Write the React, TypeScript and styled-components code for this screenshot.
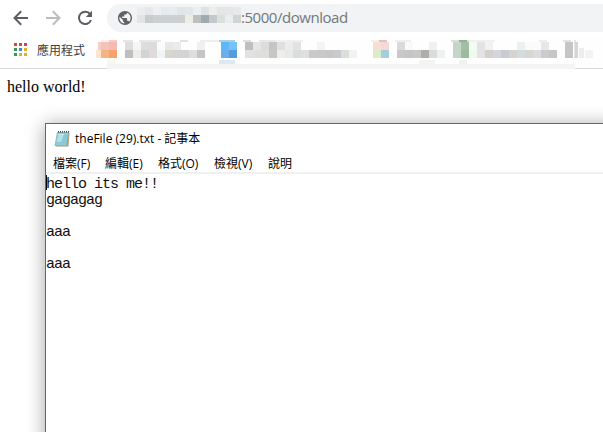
import React from 'react';
import styled, { createGlobalStyle } from 'styled-components';

const Global = createGlobalStyle`
  * { box-sizing: border-box; }
  body { margin: 0; background: #fff; overflow: hidden; }
`;
const Browser = styled.main`
  width: 603px; height: 432px; overflow: hidden; background: #fff;
  display: flex; flex-direction: column;
`;
const Toolbar = styled.header`
  height: 36px; flex: none; display: flex; align-items: center; padding-left: 13px;
`;
const Nav = styled.nav`
  display: flex; gap: 16px; width: 94px;
  svg { width: 16px; height: 16px; flex: none; overflow: visible; }
`;
const AddressBar = styled.div`
  flex: 1; height: 28px; background: #f1f3f4; border-radius: 14px 0 0 14px;
  display: flex; align-items: center; padding-left: 11px;
`;
const HostMosaic = styled.svg`
  width: 104px; height: 16px; margin: -6px 0 0 5px; flex: none;
`;
const Url = styled.span`
  font: 15px/28px "Open Sans", "Noto Sans", sans-serif; letter-spacing: -0.46px; color: #74777b;
  margin-top: -2px; white-space: pre;
`;
const Bookmarks = styled.div`
  height: 33px; flex: none; display: flex; align-items: flex-start; background: #fefefe;
`;
const AppsLink = styled.div`
  width: 96px; height: 33px; border-bottom: 1px solid #d9dcde; padding-left: 14px;
  display: flex; align-items: center; gap: 10px;
  svg { width: 13px; height: 13px; margin-top: -5px; flex: none; }
`;
const AppsLabel = styled.span`
  font: 12px/16px "Noto Sans CJK TC", sans-serif; color: #3c4043; margin-top: -4px; white-space: nowrap;
`;
const Mosaic = styled.svg`width: 507px; height: 33px; flex: none;`;
const PageText = styled.p`
  margin: 9px 0 0 7px; flex: none; font: 16px/18px "Liberation Serif", serif; color: #000;
`;
const Notepad = styled.section`
  margin: 27px 0 0 45px; width: 700px; height: 400px; flex: none; background: #fff;
  border: 1px solid #666; box-shadow: 0 2px 18px rgba(0,0,0,.36);
`;
const TitleBar = styled.div`
  height: 30px; display: flex; align-items: center; gap: 4px; padding-left: 8px;
  font: 12px/20px "Open Sans", "Noto Sans CJK TC", sans-serif; color: #000;
  svg { width: 17px; height: 18px; flex: none; }
`;
const Menu = styled.div`
  height: 20px; display: flex; padding-left: 7px; border-bottom: 2px solid #f0f0f0;
  font: 12px/20px "Open Sans", "Noto Sans CJK TC", sans-serif; color: #000; white-space: nowrap;
`;
const MenuItem = styled.span<{ $width: number }>`width: ${p => p.$width}px; flex: none;`;
const Editor = styled.pre`
  margin: 0; padding-top: 3px; font: 15px/16px "Liberation Mono", monospace; letter-spacing: -1px; color: #111;
  background: linear-gradient(#000, #000) 0 1px / 1px 15px no-repeat;
`;

type Cell = [number, string, string];
const hostCells: Cell[] = [
  [0, '#ededef', '#e2e4e5'], [1, '#e5e8ea', '#c8cbcc'], [2, '#eef1f4', '#cdd0d1'],
  [3, '#e4ebef', '#cdd0d2'], [4, '#e7ecf0', '#cdd0d2'], [5, '#e2e5e5', '#cbcfd0'],
  [6, '#e3e6e8', '#eceee4'], [7, '#eceff2', '#bcc0c1'], [8, '#dde3e3', '#a1abad'],
  [9, '#ebeeec', '#c4c9ca'], [10, '#e3e6e5', '#dce0dc'], [11, '#e3e7e7', '#e9eded'], [12, '#e6e9e9', '#d0d4d3'],
];
const W = '#fefefe';
const bookmarkCells: Cell[] = [
  [0, '#f4c2b8', '#f6b384'], [1, '#f4bcb0', '#f5a26e'], [3, '#dedede', '#bfbfbd'], [4, '#f4f6f4', '#eceeea'],
  [5, '#dcdddc', '#d2d4d2'], [6, '#dedadc', '#e0dadc'], [7, '#fafbfb', '#f2f5f5'], [8, '#e8e8e6', '#d9d6d0'],
  [9, '#ebebe9', '#d4d4d4'], [10, W, '#d4d3d8'], [11, W, '#dedfdd'], [12, '#eff2f2', '#c5c5c3'],
  [15, '#5cb8f7', '#6aaeea'], [16, '#75c2f3', '#579bdf'],
  [18, '#c0bfbd', '#e2e1df'], [19, '#e5e7e7', '#e0dfdd'], [20, '#dadddb', '#dedfdd'], [21, '#c5c6c4', '#c6c8c6'],
  [22, '#dfe1df', '#eeeeec'], [23, '#eeece8', '#e9e9e7'], [24, '#dfe3e2', '#d9dedc'], [25, W, '#e1dde2'],
  [26, W, '#cacbc8'], [27, '#f4f4f2', '#c9c8cd'], [28, W, '#c8c7c5'], [29, W, '#c8cacd'], [30, W, '#dbdfdc'], [31, W, '#f2f2f2'],
  [34, '#f8ddd2', '#dcebcb'], [35, '#f3d9d8', '#a5cdda'],
  [37, '#dadada', '#c8c8c8'], [38, '#fbf9f7', '#c4c5c5'], [39, W, '#cac8c4'], [40, W, '#b0aead'], [41, '#edf2f2', '#d9dcdb'], [42, W, '#eef0f2'],
  [44, '#c5d5c8', '#c5d6c8'], [45, '#a3bea4', '#9abb9c'], [46, '#f4faf4', '#eefaf0'], [47, '#e4e2e4', '#e4e2e4'],
  [48, '#f2f3ef', '#d4d1cc'], [49, W, '#d5d6dd'], [50, W, '#cacbd0'], [51, W, '#d4d5cf'], [52, '#ebf0f0', '#d4dcdc'],
  [53, '#fafaf6', '#d8d6d2'], [54, '#fafbfb', '#dcdce0'], [55, '#e8e6e8', '#cccace'], [56, W, '#c5c6c6'], [58, '#c5c5c5', '#c5c5c5'],
];
/* x, y, width, height, colour */
const slivers: [number, number, number, number, string][] = [
  [2, 6, 3, 8, '#f6cdc4'], [0, 14, 5, 8, '#fce5cf'], [13, 4, 8, 2, '#f2cdcb'], [5, 4, 8, 2, '#faeeee'],
  [27, 4, 10, 2, '#e6e6e6'], [43, 4, 22, 2, '#e8e8e8'], [84, 4, 8, 2, '#e2e2e2'], [104, 4, 20, 2, '#eee'],
  [123, 4, 16, 2, '#a2d0e6'], [147, 4, 8, 2, '#dedede'], [163, 4, 16, 2, '#e8e8e8'], [179, 4, 28, 2, '#f0f0f0'],
  [283, 4, 8, 2, '#e8bfbb'], [275, 4, 8, 2, '#f0f0ee'], [299, 4, 16, 2, '#eee'], [355, 4, 18, 2, '#d4e0d6'], [363, 4, 8, 2, '#8fb494'],
  [373, 4, 26, 2, '#eef2ee'], [443, 4, 8, 2, '#eee'], [467, 4, 8, 2, '#e2e2e2'],
  [123, 24, 16, 4, '#dce8f3'], [11, 24, 8, 4, '#fdf5eb'], [323, 24, 16, 4, '#f3f5f3'], [363, 24, 8, 4, '#edf4ee'],
  [478, 4, 2, 18, '#e4e5e5'], [479, 6, 3, 16, '#d2d7d6'], [483, 12, 5, 10, '#ededed'], [489, 14, 8, 8, '#f3f3f3'],
];

function Cells({ data, x, y }: { data: Cell[]; x: number; y: number }) {
  return <g shapeRendering="crispEdges">{data.map(([k, a, b]) => (
    <React.Fragment key={k}>
      <rect x={x + k * 8} y={y} width="8" height="8" fill={a} />
      <rect x={x + k * 8} y={y + 8} width="8" height="8" fill={b} />
    </React.Fragment>
  ))}</g>;
}

const appColors = ['#d5473b', '#d5473b', '#d5473b', '#33975e', '#3b85dc', '#e0b128', '#33975e', '#e0b128', '#e0b128'];

function NotepadIcon() {
  return <svg viewBox="0 0 17 18">
    <path d="M4 2 L15.5 3 L14.5 16.5 L2 16.5Z" fill="#b5a27c" />
    <path d="M3.4 2.5H14.5L12.5 15.7H1Z" fill="#8fcbd9" stroke="#78adb9" strokeWidth=".7" />
    <path d="M4.5 4H10L7 12H2.6Z" fill="#c3e9f0" />
    <path d="M3.8 6H13M3.4 8H12.8M3 10H12.5M2.6 12H12" stroke="#74bccd" strokeWidth=".4" />
    <path d="M4 1.8H15" stroke="#3e4c50" strokeWidth="1.5" strokeDasharray="1 1" />
  </svg>;
}

export default function App() {
  return <Browser>
    <Global />
    <Toolbar>
      <Nav>
        <svg viewBox="0 0 16 16" fill="none" stroke="#5a5e63" strokeWidth="2"><path d="M15 8H2M8.2 1.3L1.5 8l6.7 6.7" /></svg>
        <svg viewBox="0 0 16 16" fill="none" stroke="#babcbe" strokeWidth="2"><path d="M1 8h13M7.8 1.3L14.5 8l-6.7 6.7" /></svg>
        <svg viewBox="0 0 16 16"><path d="M13.2 4.2A6.2 6.2 0 1 0 14 10" fill="none" stroke="#5a5e63" strokeWidth="2" /><path d="M15 .8V7H8.8Z" fill="#5a5e63" /></svg>
      </Nav>
      <AddressBar>
        <svg width="14" height="14" viewBox="2 2 20 20" fill="#5f6368"><path d="M12 2C6.48 2 2 6.48 2 12s4.48 10 10 10 10-4.48 10-10S17.52 2 12 2zm-1 17.93c-3.95-.49-7-3.85-7-7.93 0-.62.08-1.21.21-1.79L9 15v1c0 1.1.9 2 2 2v1.93zm6.9-2.54c-.26-.81-1-1.39-1.9-1.39h-1v-3c0-.55-.45-1-1-1H8v-2h2c.55 0 1-.45 1-1V7h2c1.1 0 2-.9 2-2v-.41c2.93 1.19 5 4.06 5 7.41 0 2.08-.8 3.97-2.1 5.39z" /></svg>
        <HostMosaic><Cells data={hostCells} x={0} y={0} /></HostMosaic>
        <Url>:5000/download</Url>
      </AddressBar>
    </Toolbar>
    <Bookmarks>
      <AppsLink>
        <svg viewBox="0 0 13 13" shapeRendering="crispEdges">{appColors.map((c, i) => <rect key={i} x={(i % 3) * 5} y={Math.floor(i / 3) * 5} width="3" height="3" fill={c} />)}</svg>
        <AppsLabel>應用程式</AppsLabel>
      </AppsLink>
      <Mosaic>
        <g shapeRendering="crispEdges">
          <rect x="0" y="32" width="507" height="1" fill="#d9dcde" />
          <rect x="11" y="28" width="468" height="5" fill="#f4f4f4" />
          {slivers.map(([x, y, w, h, c], i) => <rect key={i} x={x} y={y} width={w} height={h} fill={c} />)}
        </g>
        <Cells data={bookmarkCells} x={5} y={6} />
      </Mosaic>
    </Bookmarks>
    <PageText>hello world!</PageText>
    <Notepad>
      <TitleBar><NotepadIcon />theFile (29).txt - 記事本</TitleBar>
      <Menu>
        <MenuItem $width={52}>檔案(F)</MenuItem><MenuItem $width={53}>編輯(E)</MenuItem>
        <MenuItem $width={56}>格式(O)</MenuItem><MenuItem $width={54}>檢視(V)</MenuItem><MenuItem $width={40}>說明</MenuItem>
      </Menu>
      <Editor>{'hello its me!!\ngagagag\n\naaa\n\naaa'}</Editor>
    </Notepad>
  </Browser>;
}
